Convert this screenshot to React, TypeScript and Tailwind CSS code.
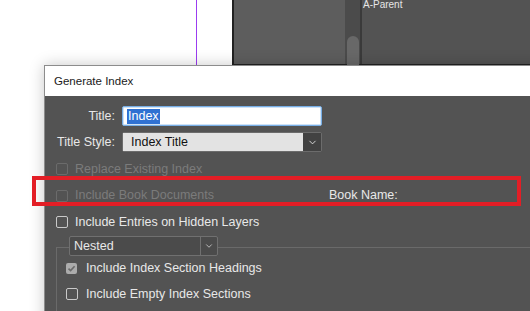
import { ChevronDown } from 'lucide-react';

const FONT = { fontFamily: '"Liberation Sans", Arial, sans-serif' };

function Box({ checked = false, disabled = false }: { checked?: boolean; disabled?: boolean }) {
  if (checked) {
    return (
      <span className="flex h-[11px] w-[11px] items-center justify-center rounded-[2px] bg-[#acacac]">
        <svg width="9" height="9" viewBox="0 0 9 9">
          <path d="M1.5 4.6 L3.6 6.6 L7.6 2.2" fill="none" stroke="#6a6a6a" strokeWidth="1.6" />
        </svg>
      </span>
    );
  }
  return (
    <span
      className={`h-[12px] w-[12px] rounded-[2px] border ${disabled ? 'border-[#6b6b6b]' : 'border-[#c9c9c9]'}`}
    />
  );
}

function Check({ label, checked, disabled, tall }: { label: string; checked?: boolean; disabled?: boolean; tall?: boolean }) {
  return (
    <div className={`flex items-center gap-[7px] ${tall ? 'h-[27px]' : 'h-[26px]'}`}>
      <Box checked={checked} disabled={disabled} />
      <span className={disabled ? 'text-[#7b7b7b]' : 'text-[#e8e8e8]'}>{label}</span>
    </div>
  );
}

export default function App() {
  return (
    <div className="relative h-[311px] w-[530px] overflow-hidden bg-white" style={FONT}>
      {/* layout page behind */}
      <div className="absolute left-[196px] top-0 h-[66px] w-px bg-[#9b3cf0]" />
      <div className="absolute left-[232px] top-0 flex h-[66px] w-[298px] border-b-2 border-l-2 border-[#222]">
        <div className="w-[111px] bg-[#5d5d5d]" />
        <div className="relative w-[15px] bg-[#4b4b4b]">
          <div className="absolute left-[2px] top-[36px] h-[40px] w-[12px] rounded-t-[6px] bg-[#686868]" />
        </div>
        <div className="w-[2px] bg-[#3a3a3a]" />
        <div className="flex-1 bg-[#535353] pl-[1px] text-[10px] leading-[10px] text-[#e6e6e6]">A-Parent</div>
      </div>

      {/* dialog */}
      <div className="absolute left-[44px] top-[65px] w-[520px] border border-[#8c8c8c] shadow-[0_0_14px_rgba(0,0,0,0.22)]">
        <div className="flex h-[30px] items-center bg-white pl-[9px] pt-px text-[11.5px] text-[#1a1a1a]">Generate Index</div>
        <div className="relative h-[230px] bg-[#535353] pl-[11px] pt-[10px] text-[12.5px]">
          <div className="grid grid-cols-[59px_200px] items-center gap-x-[7px] gap-y-[6px]">
            <span className="text-right text-[#e8e8e8]">Title:</span>
            <div className="flex h-[20px] items-center rounded-[2px] border border-[#77aee6] bg-white pl-[4px] shadow-[inset_0_0_0_1px_#cfe3f7]">
              <span className="bg-[#2f71d2] px-px leading-[15px] text-white">Index</span>
            </div>
            <span className="text-right text-[#e8e8e8]">Title Style:</span>
            <div className="flex h-[20px] rounded-[2px] border border-[#6c6c6c]">
              <div className="flex flex-1 items-center bg-[#e3e3e3] pl-[8px] text-[#111]">Index Title</div>
              <div className="flex w-[18px] items-center justify-center bg-[#424242]">
                <ChevronDown size={11} color="#e0e0e0" strokeWidth={2} />
              </div>
            </div>
          </div>

          <div className="mt-[4px]">
            <Check label="Replace Existing Index" disabled />
            <div className="flex items-center">
              <div className="w-[273px]">
                <Check label="Include Book Documents" disabled tall />
              </div>
              <span className="text-[#e8e8e8]">Book Name:</span>
            </div>
            <Check label="Include Entries on Hidden Layers" />
          </div>

          <div className="relative mt-[1px]">
            <div className="absolute left-0 top-[11px] h-[80px] w-[480px] border-l border-t border-[#6a6a6a]" />
            <div className="relative ml-[13px] flex h-[20px] w-[149px] rounded-[2px] border border-[#707070] bg-[#4b4b4b]">
              <div className="flex flex-1 items-center pl-[4px] text-[#e8e8e8]">Nested</div>
              <div className="flex w-[17px] items-center justify-center border-l border-[#707070]">
                <ChevronDown size={10} color="#cfcfcf" strokeWidth={2} />
              </div>
            </div>
            <div className="relative pl-[10px]">
              <div className="flex h-[24px] items-center gap-[9px]">
                <Box checked />
                <span className="text-[#e8e8e8]">Include Index Section Headings</span>
              </div>
              <div className="flex h-[28px] items-center gap-[8px]">
                <Box />
                <span className="text-[#e8e8e8]">Include Empty Index Sections</span>
              </div>
            </div>
          </div>

          {/* annotation */}
          <div className="absolute left-[-13px] top-[80px] h-[30px] w-[489px] border-4 border-[#e31e26]" />
        </div>
      </div>
    </div>
  );
}
